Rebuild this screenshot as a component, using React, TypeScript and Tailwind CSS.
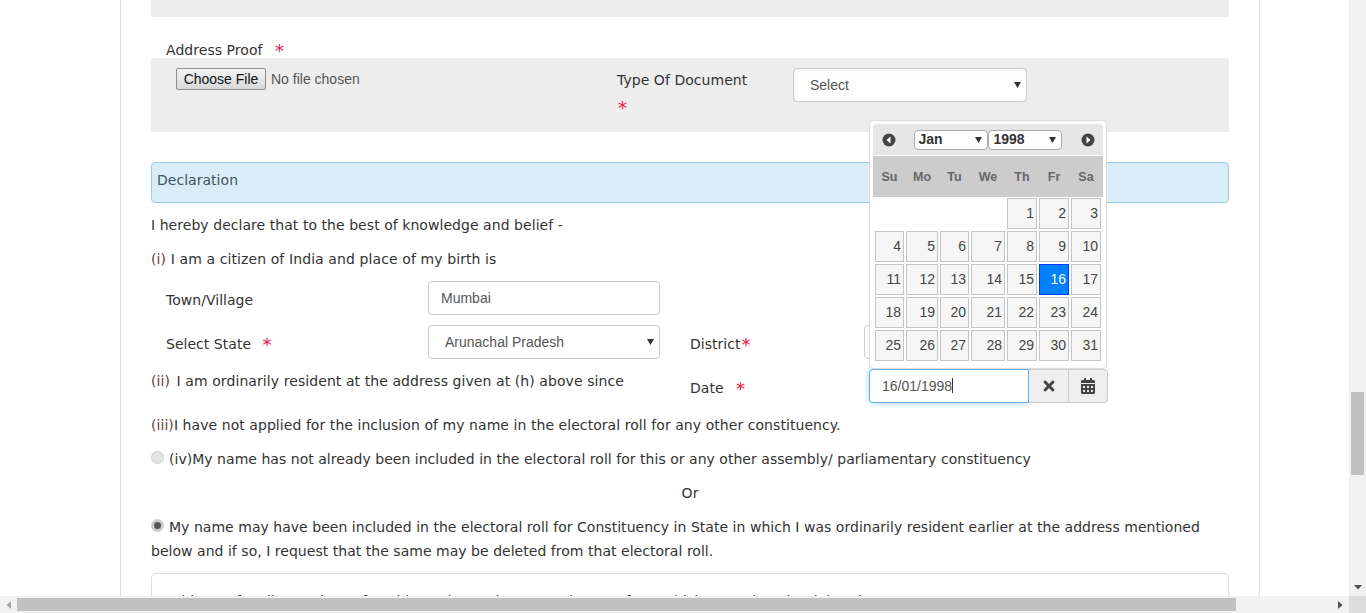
import { FaCalendarAlt, FaTimes } from 'react-icons/fa'

const dayNames = ['Su', 'Mo', 'Tu', 'We', 'Th', 'Fr', 'Sa']
const colClass = 'grid grid-cols-[29px_32px_29px_34px_30px_30px_30px] gap-x-[2px]'
const sansClass = "font-['Liberation_Sans',sans-serif] tracking-normal"

function Star({ className = '' }: { className?: string }) {
  return <span className={`text-[#f0123f] text-[18px] leading-none align-[-2px] ${className}`}>*</span>
}

function ArrowCircle({ dir }: { dir: 'left' | 'right' }) {
  return (
    <svg width="14" height="14" viewBox="0 0 14 14">
      <circle cx="7" cy="7" r="6.5" fill="#444" />
      <path d={dir === 'left' ? 'M8.5 3.5 4.5 7l4 3.5z' : 'M5.5 3.5 9.5 7l-4 3.5z'} fill="#fff" />
    </svg>
  )
}

function FakeSelect({ label, className }: { label: string; className: string }) {
  return (
    <div className={`flex items-center justify-between bg-white border border-[#ccc] rounded ${className}`}>
      <span>{label}</span>
      <svg width="7" height="6" viewBox="0 0 7 6" className="mr-[5px]">
        <path d="M0 0h7L3.5 6z" fill="#333" />
      </svg>
    </div>
  )
}

function Calendar() {
  const cells: (number | null)[] = [null, null, null, null]
  for (let i = 1; i <= 31; i++) cells.push(i)
  return (
    <div className={`absolute left-[718px] top-[120px] w-[238px] h-[249px] bg-white border border-[#ddd] rounded p-[3px] z-10 ${sansClass}`}>
      <div className="h-[31px] mb-[1px] bg-[#e6e6e6] rounded-t-sm flex items-center justify-between pl-[9px] pr-[8px]">
        <ArrowCircle dir="left" />
        <div className="flex -ml-[2px] text-[14px] font-bold text-[#333]">
          <FakeSelect label="Jan" className="w-[74px] h-[20px] pl-[4px] !rounded-sm !border-[#aaa]" />
          <FakeSelect label="1998" className="w-[74px] h-[20px] pl-[5px] !rounded-sm !border-[#aaa]" />
        </div>
        <ArrowCircle dir="right" />
      </div>
      <div className="h-[41px] bg-[#ccc] flex items-center pl-[2px] pt-px">
        <div className={`${colClass} text-[12.5px] font-bold text-[#666] text-center`}>
          {dayNames.map((d) => (
            <span key={d}>{d}</span>
          ))}
        </div>
      </div>
      <div className={`${colClass} gap-y-[2px] pt-[1px] pl-[2px] text-[14px] text-[#454545]`}>
        {cells.map((c, i) =>
          c === null ? (
            <div key={i} className="h-[31px]" />
          ) : (
            <div
              key={i}
              className={`h-[31px] border text-right leading-[29px] pr-[2px] ${
                c === 16 ? 'bg-[#007fff] border-[#003eff] text-white' : 'bg-[#f6f6f6] border-[#c5c5c5]'
              }`}
            >
              {c}
            </div>
          )
        )}
      </div>
    </div>
  )
}

function Para({ className = '', children }: { className?: string; children: React.ReactNode }) {
  return <div className={`text-[14px] leading-[24px] ${className}`}>{children}</div>
}

export default function App() {
  return (
    <div className="w-[1366px] h-[613px] overflow-hidden flex flex-col bg-white text-[#333] tracking-[0.03px] font-['DejaVu_Sans',sans-serif]">
      <div className="flex flex-1 min-h-0">
        <div className="flex-1 min-w-0 overflow-hidden pl-[120px]">
          <div className="w-[1140px] min-h-full border-x border-[#ddd] px-[30px]">
            <div className="relative w-[1078px]">
              <div className="h-[17px] bg-[#ededed]" />

              <div className="h-[41px] pl-[15px] pt-[21px] text-[14px] leading-[24px] whitespace-nowrap tracking-[0.05px]">
                Address Proof <Star className="ml-[8px]" />
              </div>

              <div className="h-[74px] bg-[#ededed] flex">
                <div className={`w-[465px] pl-[25px] pt-[10px] flex items-start text-[14px] ${sansClass}`}>
                  <button className="w-[90px] h-[22px] bg-gradient-to-b from-[#f5f5f5] to-[#d8d8d8] border border-[#8e8e8e] rounded-[2px] text-[#111] leading-[18px]">
                    Choose File
                  </button>
                  <span className="ml-[5px] leading-[22px] text-[#555]">No file chosen</span>
                </div>
                <div className="w-[177px] pt-[10px] text-[14px] leading-[24px] tracking-[0.05px]">
                  <div className="pl-px">Type Of Document</div>
                  <Star className="block mt-[7px] ml-[2px]" />
                </div>
                <FakeSelect
                  label="Select"
                  className={`w-[234px] h-[34px] mt-[10px] pl-[16px] text-[14px] text-[#555] shadow-inner ${sansClass}`}
                />
              </div>

              <div className="mt-[30px] h-[41px] bg-[#d9edf7] border border-[#9acfea] rounded pl-[5px] text-[14px] leading-[35px] text-[#3f5560]">
                Declaration
              </div>

              <Para className="mt-[10px] tracking-[0.05px]">I hereby declare that to the best of knowledge and belief -</Para>
              <Para className="mt-[10px] tracking-[0.1px]">
                <span className="text-[#6b4040]">(i)</span> I am a citizen of India and place of my birth is
              </Para>

              <div className="mt-[10px] flex items-center h-[34px]">
                <span className="w-[277px] pl-[15px] text-[14px] pt-[4px]">Town/Village</span>
                <div className={`w-[232px] h-[34px] border border-[#ccc] rounded pl-[12px] text-[14px] leading-[32px] text-[#555] ${sansClass}`}>
                  Mumbai
                </div>
              </div>

              <div className="mt-[10px] flex items-center h-[34px]">
                <span className="w-[277px] pl-[15px] text-[14px] pt-[4px]">
                  Select State <Star className="ml-[7px]" />
                </span>
                <FakeSelect
                  label="Arunachal Pradesh"
                  className={`w-[232px] h-[34px] pl-[16px] text-[14px] text-[#555] ${sansClass}`}
                />
                <span className="ml-[30px] w-[174px] text-[14px] pt-[4px]">
                  District
                  <Star className="ml-px" />
                </span>
                <div className="w-[200px] h-[34px] border border-[#ccc] rounded" />
              </div>

              <div className="h-[44px] flex">
                <span className="w-[539px] text-[14px] pt-[10px] leading-[24px] tracking-[0.08px]">
                  <span className="text-[#6b4040] mr-[2px]">(ii)</span> I am ordinarily resident at the address given at (h) above since
                </span>
                <span className="w-[179px] text-[14px] pt-[17px] leading-[24px]">
                  Date <Star className="ml-[8px]" />
                </span>
                <div className={`flex h-[34px] mt-[10px] text-[14px] ${sansClass}`}>
                  <div className="w-[160px] border border-[#66afe9] rounded-l shadow-[0_0_6px_rgba(102,175,233,0.6)] pl-[12px] leading-[32px] text-[#555] bg-white">
                    16/01/1998<span className="inline-block w-px h-[15px] bg-[#333] align-[-2px]" />
                  </div>
                  <div className="w-[39px] bg-[#eee] border-y border-[#ccc] flex items-center justify-center text-[#444]">
                    <FaTimes size={16} />
                  </div>
                  <div className="w-[40px] bg-[#eee] border border-[#ccc] rounded-r flex items-center justify-center text-[#444]">
                    <FaCalendarAlt size={16} />
                  </div>
                </div>
              </div>

              <Para className="mt-[10px] tracking-[0.06px]">
                <span className="text-[#6b4040]">(iii)</span>I have not applied for the inclusion of my name in the electoral roll for any other constituency.
              </Para>

              <Para className="mt-[10px] flex items-center">
                <span className="w-[13px] h-[13px] rounded-full bg-[#e4e4e4] border border-[#ccc] mr-[5px] -mt-[4px]" />
                (iv)My name has not already been included in the electoral roll for this or any other assembly/ parliamentary constituency
              </Para>

              <Para className="mt-[10px] text-center">Or</Para>

              <Para className="mt-[10px] flex items-center">
                <span className="w-[13px] h-[13px] rounded-full bg-[#555] border-[3px] border-[#ccc] mr-[5px] -mt-[4px]" />
                My name may have been included in the electoral roll for Constituency in State in which I was ordinarily resident earlier at the address mentioned
              </Para>
              <Para>below and if so, I request that the same may be deleted from that electoral roll.</Para>

              <div className="mt-[10px] h-[60px] border border-[#ddd] rounded px-[15px] pt-[15px]">
                <Para>Address of Ordinary place of Residence in Previous Constituency from which name is to be deleted</Para>
              </div>

              <Calendar />
            </div>
          </div>
        </div>

        <div className="w-[17px] bg-[#f1f1f1] flex flex-col items-center text-[#505050]">
          <div className="h-[392px]" />
          <div className="w-[13px] h-[83px] bg-[#c1c1c1]" />
          <div className="flex-1" />
          <div className="h-[17px] flex items-center justify-center">
            <svg width="8" height="5" viewBox="0 0 8 5"><path d="M0 0h8L4 4.5z" fill="#505050" /></svg>
          </div>
        </div>
      </div>

      <div className="h-[17px] bg-[#f1f1f1] flex items-center">
        <div className="w-[17px] flex justify-center">
          <svg width="5" height="8" viewBox="0 0 5 8"><path d="M5 0v8L.5 4z" fill="#a3a3a3" /></svg>
        </div>
        <div className="w-[1219px] h-[13px] bg-[#c1c1c1]" />
        <div className="flex-1" />
        <div className="w-[17px] flex justify-center">
          <svg width="5" height="8" viewBox="0 0 5 8"><path d="M0 0v8L4.5 4z" fill="#505050" /></svg>
        </div>
        <div className="w-[17px] h-[17px] bg-[#dcdcdc]" />
      </div>
    </div>
  )
}
